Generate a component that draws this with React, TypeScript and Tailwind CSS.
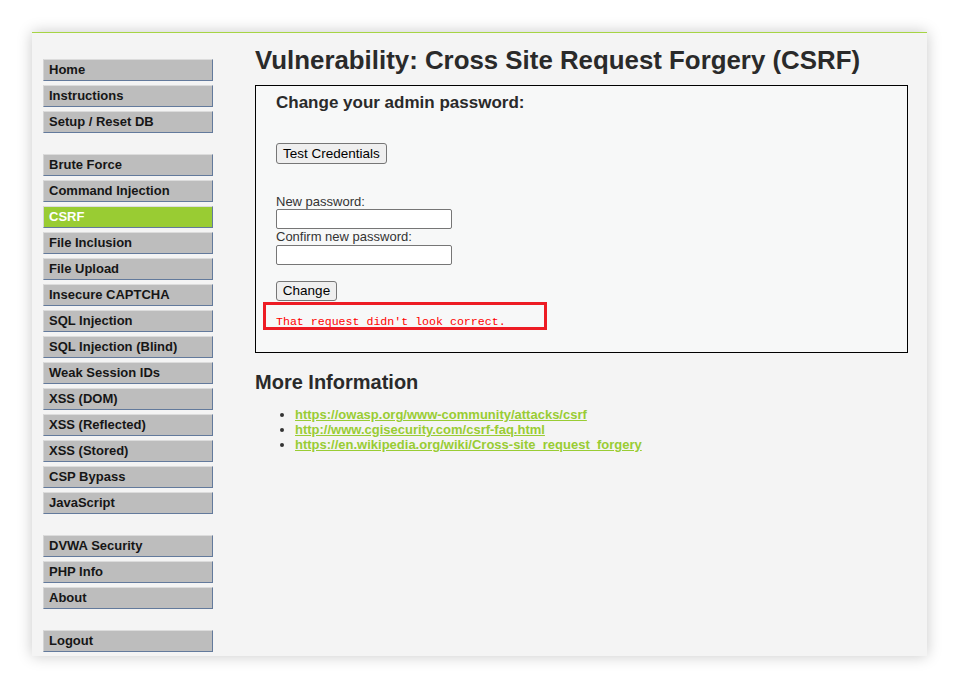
const groups: string[][] = [
  ["Home", "Instructions", "Setup / Reset DB"],
  [
    "Brute Force",
    "Command Injection",
    "CSRF",
    "File Inclusion",
    "File Upload",
    "Insecure CAPTCHA",
    "SQL Injection",
    "SQL Injection (Blind)",
    "Weak Session IDs",
    "XSS (DOM)",
    "XSS (Reflected)",
    "XSS (Stored)",
    "CSP Bypass",
    "JavaScript",
  ],
  ["DVWA Security", "PHP Info", "About"],
  ["Logout"],
];

const links = [
  "https://owasp.org/www-community/attacks/csrf",
  "http://www.cgisecurity.com/csrf-faq.html",
  "https://en.wikipedia.org/wiki/Cross-site_request_forgery",
];

function MenuItem({ label }: { label: string }) {
  const active = label === "CSRF";
  return (
    <li
      className={`flex h-[22px] items-center border-t border-l border-r border-b border-t-[#dcdcdc] border-l-[#d4d4d4] border-r-[#637a9c] border-b-[#637a9c] pl-[5px] text-[13px] font-bold ${
        active ? "bg-[#99cc33] text-white" : "bg-[#bdbdbd] text-[#161616]"
      }`}
    >
      {label}
    </li>
  );
}

export default function App() {
  return (
    <div className="h-[688px] bg-white p-[32px] pb-0 font-['Liberation_Sans',Arial,sans-serif]">
      <div className="flex h-[624px] w-[895px] border-t border-[#a6d444] bg-[#f4f4f4] shadow-[0_0_14px_rgba(0,0,0,0.22)]">
        {/* sidebar */}
        <nav className="flex w-[181px] shrink-0 flex-col gap-[21px] pl-[11px] pt-[26px]">
          {groups.map((g, i) => (
            <ul key={i} className="flex flex-col gap-[4px]">
              {g.map((label) => (
                <MenuItem key={label} label={label} />
              ))}
            </ul>
          ))}
        </nav>

        {/* main */}
        <main className="ml-[42px] w-[653px] pt-[12px] text-[#2a2a2a]">
          <h1 className="text-[25.85px] leading-[30px] font-bold">
            Vulnerability: Cross Site Request Forgery (CSRF)
          </h1>

          <div className="mt-[10px] h-[268px] border border-black bg-[#f7f8f8] pl-[20px] pt-[7px]">
            <h3 className="text-[17px] leading-[20px] font-bold">Change your admin password:</h3>

            <button className="mt-[30px] h-[21px] rounded-[3px] border border-[#767676] bg-[#efefef] px-[6px] text-[13.5px] leading-none text-black">
              Test Credentials
            </button>

            <div className="mt-[29px] text-[13px] leading-[15px] text-[#333]">New password:</div>
            <input
              type="password"
              className="block h-[20px] w-[176px] rounded-[2px] border border-[#767676] bg-white"
            />
            <div className="text-[13px] leading-[16px] text-[#333]">Confirm new password:</div>
            <input
              type="password"
              className="block h-[20px] w-[176px] rounded-[2px] border border-[#767676] bg-white"
            />

            <button className="mt-[16px] block h-[20px] w-[61px] rounded-[3px] border border-[#767676] bg-[#efefef] text-[13.5px] leading-none text-black">
              Change
            </button>

            <div className="-ml-[13px] mt-[1px] h-[28px] w-[284px] border-[3px] border-[#ed1c24] pl-[10px] pt-[11px] font-['Liberation_Mono',monospace] text-[11.6px] leading-[12px] text-[#ff0000]">
              That request didn&apos;t look correct.
            </div>
          </div>

          <h2 className="mt-[18px] text-[20px] leading-[22px] font-bold">More Information</h2>
          <ul className="mt-[14px] list-disc pl-[40px] text-[13px] leading-[15px] font-bold">
            {links.map((l) => (
              <li key={l} className="marker:text-[#333]">
                <a href="#" className="text-[#99cc33] underline">
                  {l}
                </a>
              </li>
            ))}
          </ul>
        </main>
      </div>
    </div>
  );
}
